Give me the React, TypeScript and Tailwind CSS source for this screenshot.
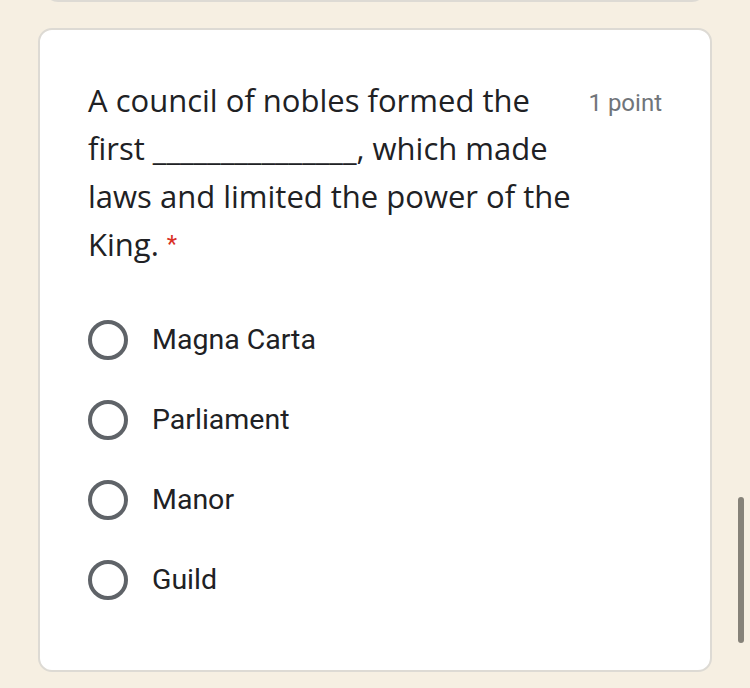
import React from "react";

const options = ["Magna Carta", "Parliament", "Manor", "Guild"];

function Radio() {
  return (
    <div className="w-[40px] h-[40px] rounded-full border-[4px] border-[#5f6368] shrink-0" />
  );
}

export default function App() {
  return (
    <div className="relative h-[688px] w-[750px] overflow-hidden bg-[#f6efe2]">
      {/* previous question card, mostly scrolled off */}
      <div className="mx-[44px] -mt-[28px] h-[30px] rounded-b-[14px] border-2 border-[#dddad4] bg-white" />

      <div className="mx-[38px] mt-[26px] h-[644px] rounded-[14px] border-2 border-[#dddad4] bg-white px-[48px] pt-[46px]">
        <div className="flex items-start justify-between">
          <div
            className="text-[31px] leading-[48px] text-[#202124]"
            style={{ fontFamily: '"Open Sans", Roboto, sans-serif' }}
          >
            A council of nobles formed the
            <br />
            first _______________, which made
            <br />
            laws and limited the power of the
            <br />
            King.{" "}
            <span
              className="align-top text-[24px] text-[#d93025]"
              style={{ fontFamily: "Roboto, sans-serif" }}
            >
              *
            </span>
          </div>
          <div
            className="pt-[12px] text-[24px] leading-[30px] text-[#70757a]"
            style={{ fontFamily: "Roboto, sans-serif" }}
          >
            1 point
          </div>
        </div>

        <div className="mt-[32px] flex flex-col">
          {options.map((o) => (
            <div key={o} className="flex h-[80px] items-center gap-[24px]">
              <Radio />
              <span
                className="text-[28.5px] text-[#202124]"
                style={{ fontFamily: "Roboto, sans-serif" }}
              >
                {o}
              </span>
            </div>
          ))}
        </div>
      </div>

      {/* scrollbar overlay */}
      <div className="absolute left-[738px] top-[497px] h-[146px] w-[6px] rounded-full bg-[#868279]" />
    </div>
  );
}
